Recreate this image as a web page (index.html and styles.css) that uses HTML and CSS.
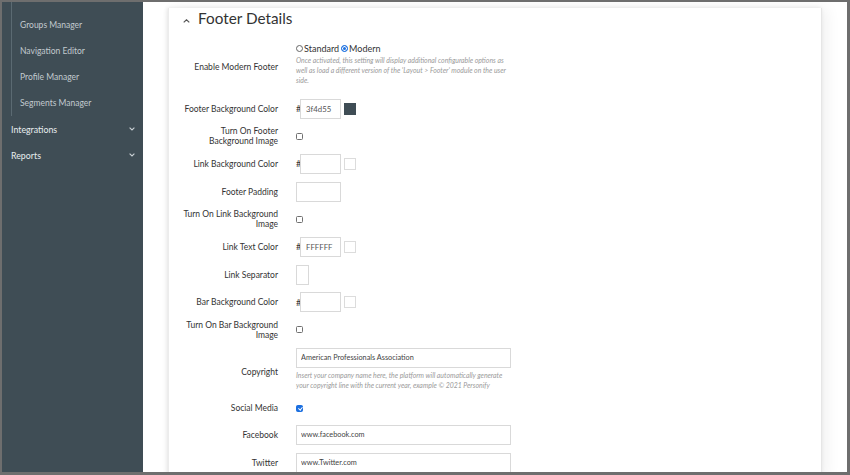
FILE: index.html
```html
<!DOCTYPE html>
<html>
<head>
<meta charset="utf-8">
<link rel="stylesheet" href="styles.css">
</head>
<body>
<div class="frame">
  <nav class="sidebar">
    <ul class="submenu">
      <li>Footer Editor</li>
      <li>Groups Manager</li>
      <li>Navigation Editor</li>
      <li>Profile Manager</li>
      <li>Segments Manager</li>
    </ul>
    <div class="menu-item"><span>Integrations</span><svg class="chev" viewBox="0 0 6 4" width="6" height="4"><path d="M0.6 0.6 L3 3 L5.4 0.6" fill="none" stroke="#c9d0d4" stroke-width="1.1"/></svg></div>
    <div class="menu-item"><span>Reports</span><svg class="chev" viewBox="0 0 6 4" width="6" height="4"><path d="M0.6 0.6 L3 3 L5.4 0.6" fill="none" stroke="#c9d0d4" stroke-width="1.1"/></svg></div>
  </nav>
  <main class="main">
    <section class="card">
      <h2 class="card-title"><svg class="caret" viewBox="0 0 7 4" width="7" height="4"><path d="M0.7 3.4 L3.5 0.8 L6.3 3.4" fill="none" stroke="#555" stroke-width="1.2"/></svg>Footer Details</h2>
      <div class="form">
        <label class="lbl">Enable Modern Footer</label>
        <div class="ctl ctl-stack ctl-first">
          <div class="radios">
            <input type="radio" name="ft" class="radio"><span>Standard</span>
            <input type="radio" name="ft" class="radio" checked><span>Modern</span>
          </div>
          <p class="help">Once activated, this setting will display additional configurable options as well as load a different version of the 'Layout &gt; Footer' module on the user side.</p>
        </div>

        <label class="lbl">Footer Background Color</label>
        <div class="ctl"><span class="hash">#</span><input class="inp inp-color" value="3f4d55"><span class="swatch swatch-dark"></span></div>

        <label class="lbl">Turn On Footer Background Image</label>
        <div class="ctl"><input type="checkbox" class="cb"></div>

        <label class="lbl">Link Background Color</label>
        <div class="ctl"><span class="hash">#</span><input class="inp inp-color" value=""><span class="swatch"></span></div>

        <label class="lbl">Footer Padding</label>
        <div class="ctl"><input class="inp inp-pad" value=""></div>

        <label class="lbl">Turn On Link Background Image</label>
        <div class="ctl"><input type="checkbox" class="cb"></div>

        <label class="lbl">Link Text Color</label>
        <div class="ctl"><span class="hash">#</span><input class="inp inp-color" value="FFFFFF"><span class="swatch"></span></div>

        <label class="lbl">Link Separator</label>
        <div class="ctl"><input class="inp inp-sep" value=""></div>

        <label class="lbl">Bar Background Color</label>
        <div class="ctl"><span class="hash">#</span><input class="inp inp-color" value=""><span class="swatch"></span></div>

        <label class="lbl">Turn On Bar Background Image</label>
        <div class="ctl"><input type="checkbox" class="cb"></div>

        <label class="lbl lbl-copy">Copyright</label>
        <div class="ctl ctl-stack ctl-copy">
          <input class="inp inp-wide" value="American Professionals Association">
          <p class="help">Insert your company name here, the platform will automatically generate your copyright line with the current year, example © 2021 Personify</p>
        </div>

        <label class="lbl">Social Media</label>
        <div class="ctl ctl-short"><input type="checkbox" class="cb" checked></div>

        <label class="lbl">Facebook</label>
        <div class="ctl"><input class="inp inp-wide" value="www.facebook.com"></div>

        <label class="lbl">Twitter</label>
        <div class="ctl"><input class="inp inp-wide" value="www.Twitter.com"></div>
      </div>
    </section>
  </main>
</div>
</body>
</html>
```
FILE: styles.css
```css
* { box-sizing: border-box; }
html, body { margin: 0; padding: 0; background: #fff; }
body { font-family: Lato, "Noto Sans", sans-serif; color: #333; }

.frame {
  width: 850px;
  height: 475px;
  border: 2px solid #6e6e6e;
  border-right-width: 3px;
  border-bottom-width: 3px;
  display: flex;
  overflow: hidden;
}

/* Sidebar */
.sidebar {
  flex: none;
  width: 141px;
  background: #3f4d55;
  overflow: hidden;
}
.submenu {
  list-style: none;
  margin: -16px 0 0 9px;
  padding: 0;
  border-left: 1px solid #5b6a72;
}
.submenu li {
  height: 26px;
  line-height: 27px;
  padding-left: 8px;
  font-size: 8.5px;
  color: #c2cacf;
  white-space: nowrap;
}
.menu-item {
  height: 26px;
  display: flex;
  align-items: center;
  justify-content: space-between;
  padding: 0 8px 0 9px;
  font-size: 8.8px;
  color: #e9edef;
}
.chev { display: block; }

/* Main */
.main {
  flex: 1;
  padding: 0 25px;
  background: #fff;
  overflow: hidden;
}
.card {
  height: 100%;
  background: #fff;
  box-shadow: -1px 0 4px rgba(0,0,0,0.10), 5px 0 14px rgba(0,0,0,0.06);
  border-left: 1px solid #ececec;
  border-right: 1px solid #e6e6e6;
}
.card-title {
  margin: 6px 0 0 0;
  padding-left: 14px;
  height: 20px;
  line-height: 20px;
  font-size: 15.3px;
  font-weight: 400;
  color: #333;
  display: flex;
  align-items: center;
}
.caret { margin: 6px 8px 0 0; }

.form {
  display: grid;
  grid-template-columns: 98px 215px;
  column-gap: 18px;
  row-gap: 7.67px;
  padding-left: 11px;
  margin-top: 15px;
}
.lbl {
  align-self: center;
  text-align: right;
  font-size: 8.5px;
  line-height: 10px;
  color: #333;
}
.lbl-copy { margin-top: 4px; }
.ctl {
  min-height: 20px;
  display: flex;
  align-items: center;
}
.ctl-short { min-height: 18px; }
.ctl-stack { flex-direction: column; align-items: flex-start; }
.ctl-first { padding-bottom: 6px; }
.ctl-copy { padding-bottom: 2px; }

.radios {
  display: flex;
  align-items: center;
  height: 10px;
  font-size: 9px;
  color: #333;
}
.radio {
  -webkit-appearance: none;
  appearance: none;
  width: 7px;
  height: 7px;
  margin: 0 1px 0 0;
  border: 1px solid #666;
  border-radius: 50%;
  background: #fff;
}
.radio:checked {
  border-color: #1b6fe0;
  background: #1b6fe0;
  box-shadow: inset 0 0 0 1px #fff;
}
.radios span + .radio { margin-left: 2px; }

.help {
  margin: 2px 0 0 0;
  font-size: 6.9px;
  line-height: 10px;
  font-style: italic;
  color: #9a9a9a;
}

.hash {
  font-size: 9px;
  color: #333;
  width: 4px;
}
.inp {
  height: 20px;
  border: 1px solid #d9d9d9;
  border-radius: 0;
  font-family: Lato, "Noto Sans", sans-serif;
  font-size: 7.8px;
  color: #555;
  padding: 0 4px;
  margin: 0;
  outline: none;
  background: #fff;
}
.inp-color { width: 41px; padding-left: 5px; }
.inp-pad { width: 45px; }
.inp-sep { width: 13px; }
.inp-wide { width: 215px; color: #444; font-size: 7.3px; }

.swatch {
  width: 12px;
  height: 12px;
  margin-left: 3px;
  border: 1px solid #dcdcdc;
  background: #fff;
}
.swatch-dark { background: #3f4d55; border-color: #3f4d55; }

.cb {
  -webkit-appearance: none;
  appearance: none;
  width: 7px;
  height: 7px;
  margin: 0;
  border: 1px solid #707070;
  border-radius: 1.5px;
  background: #fff;
  position: relative;
}
.cb:checked {
  background: #1b6fe0;
  border-color: #1b6fe0;
}
.cb:checked::after {
  content: "";
  position: absolute;
  left: 1.5px;
  top: 0px;
  width: 1.5px;
  height: 3px;
  border: solid #fff;
  border-width: 0 1px 1px 0;
  transform: rotate(40deg);
}
```
